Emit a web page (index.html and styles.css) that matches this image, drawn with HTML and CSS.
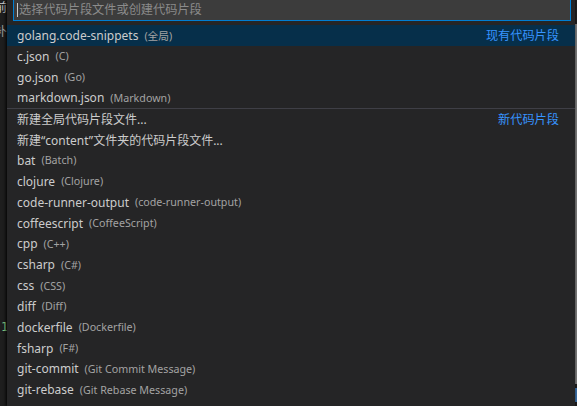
FILE: index.html
```html
<!DOCTYPE html>
<html lang="zh">
<head>
<meta charset="utf-8">
<link rel="stylesheet" href="styles.css">
</head>
<body>
<div class="screen">
  <div class="gutter">
    <div class="gline g-top"><span>眉前</span></div>
    <div class="gline g-second"><span>补补</span></div>
    <div class="gline g-num"><span>1</span></div>
  </div>
  <div class="picker">
    <div class="input-wrap">
      <div class="input"><span class="caret"></span><span class="placeholder">选择代码片段文件或创建代码片段</span></div>
    </div>
    <ul class="list">
      <li class="row selected"><span class="label">golang.code-snippets</span><span class="desc">(全局)</span><span class="tag">现有代码片段</span></li>
      <li class="row"><span class="label">c.json</span><span class="desc">(C)</span></li>
      <li class="row"><span class="label">go.json</span><span class="desc">(Go)</span></li>
      <li class="row"><span class="label">markdown.json</span><span class="desc">(Markdown)</span></li>
      <li class="row sep"><span class="label">新建全局代码片段文件...</span><span class="tag">新代码片段</span></li>
      <li class="row"><span class="label">新建“content”文件夹的代码片段文件...</span></li>
      <li class="row"><span class="label">bat</span><span class="desc">(Batch)</span></li>
      <li class="row"><span class="label">clojure</span><span class="desc">(Clojure)</span></li>
      <li class="row"><span class="label">code-runner-output</span><span class="desc">(code-runner-output)</span></li>
      <li class="row"><span class="label">coffeescript</span><span class="desc">(CoffeeScript)</span></li>
      <li class="row"><span class="label">cpp</span><span class="desc">(C++)</span></li>
      <li class="row"><span class="label">csharp</span><span class="desc">(C#)</span></li>
      <li class="row"><span class="label">css</span><span class="desc">(CSS)</span></li>
      <li class="row"><span class="label">diff</span><span class="desc">(Diff)</span></li>
      <li class="row"><span class="label">dockerfile</span><span class="desc">(Dockerfile)</span></li>
      <li class="row"><span class="label">fsharp</span><span class="desc">(F#)</span></li>
      <li class="row"><span class="label">git-commit</span><span class="desc">(Git Commit Message)</span></li>
      <li class="row"><span class="label">git-rebase</span><span class="desc">(Git Rebase Message)</span></li>
    </ul>
  </div>
  <div class="scroll-edge">
    <div class="edge-bar"></div>
    <div class="edge-marks"></div>
  </div>
</div>
</body>
</html>
```

FILE: styles.css
```css
* { box-sizing: border-box; }
html, body {
  margin: 0;
  padding: 0;
  width: 577px;
  height: 406px;
  overflow: hidden;
  background: #1e1e1e;
}
body {
  font-family: "Noto Sans", "Noto Sans CJK SC", sans-serif;
  color: #cccccc;
}
.screen {
  display: flex;
  height: 406px;
}
.gutter {
  width: 7px;
  flex: none;
  overflow: hidden;
  background: #1e1e1e;
  font-size: 12px;
  color: #c8c8c8;
}
.gline {
  display: flex;
  justify-content: flex-end;
  white-space: nowrap;
  height: 20px;
  line-height: 20px;
}
.g-top { margin-top: -2px; }
.g-second { margin-top: 4px; color: #9a9a9a; }
.g-num {
  margin-top: 275px;
  justify-content: flex-start;
  padding-left: 1px;
  color: #89d185;
  font-family: "DejaVu Sans Mono", monospace;
  font-size: 12px;
}
.picker {
  width: 568px;
  flex: none;
  background: #252526;
  box-shadow: -1px 0 3px #000;
  position: relative;
  z-index: 1;
}
.input-wrap {
  padding: 0 4px 0 6px;
}
.input {
  height: 21px;
  background: #3c3c3c;
  border: 1px solid #007fd4;
  border-top: none;
  display: flex;
  align-items: center;
  padding-left: 3px;
  font-size: 12.2px;
}
.caret {
  width: 1px;
  height: 14px;
  background: #cccccc;
  margin-right: 1px;
}
.placeholder {
  color: #8b8b8b;
  line-height: 20px;
}
.list {
  list-style: none;
  margin: 4px 0 0 0;
  padding: 0;
}
.row {
  height: 20.85px;
  display: flex;
  align-items: center;
  padding: 0 16px 0 10px;
  white-space: nowrap;
  font-size: 12px;
}
.row.selected {
  background: #062f4a;
}
.row.sep {
  border-top: 1px solid #3f3f46;
}
.label {
  color: #cccccc;
}
.desc {
  margin-left: 6px;
  font-size: 10.7px;
  color: #a3a3a3;
}
.tag {
  margin-left: auto;
  color: #3794ff;
  font-size: 12.2px;
}
.scroll-edge {
  flex: 1;
  display: flex;
  flex-direction: column;
  background: #1e1e1e;
}
.edge-bar {
  margin-top: 24px;
  height: 360px;
  background: #7a7a7a;
  width: 2px;
}
.edge-marks {
  height: 14px;
  width: 2px;
  margin-top: 4px;
  background: #3a6ea5;
}
```
